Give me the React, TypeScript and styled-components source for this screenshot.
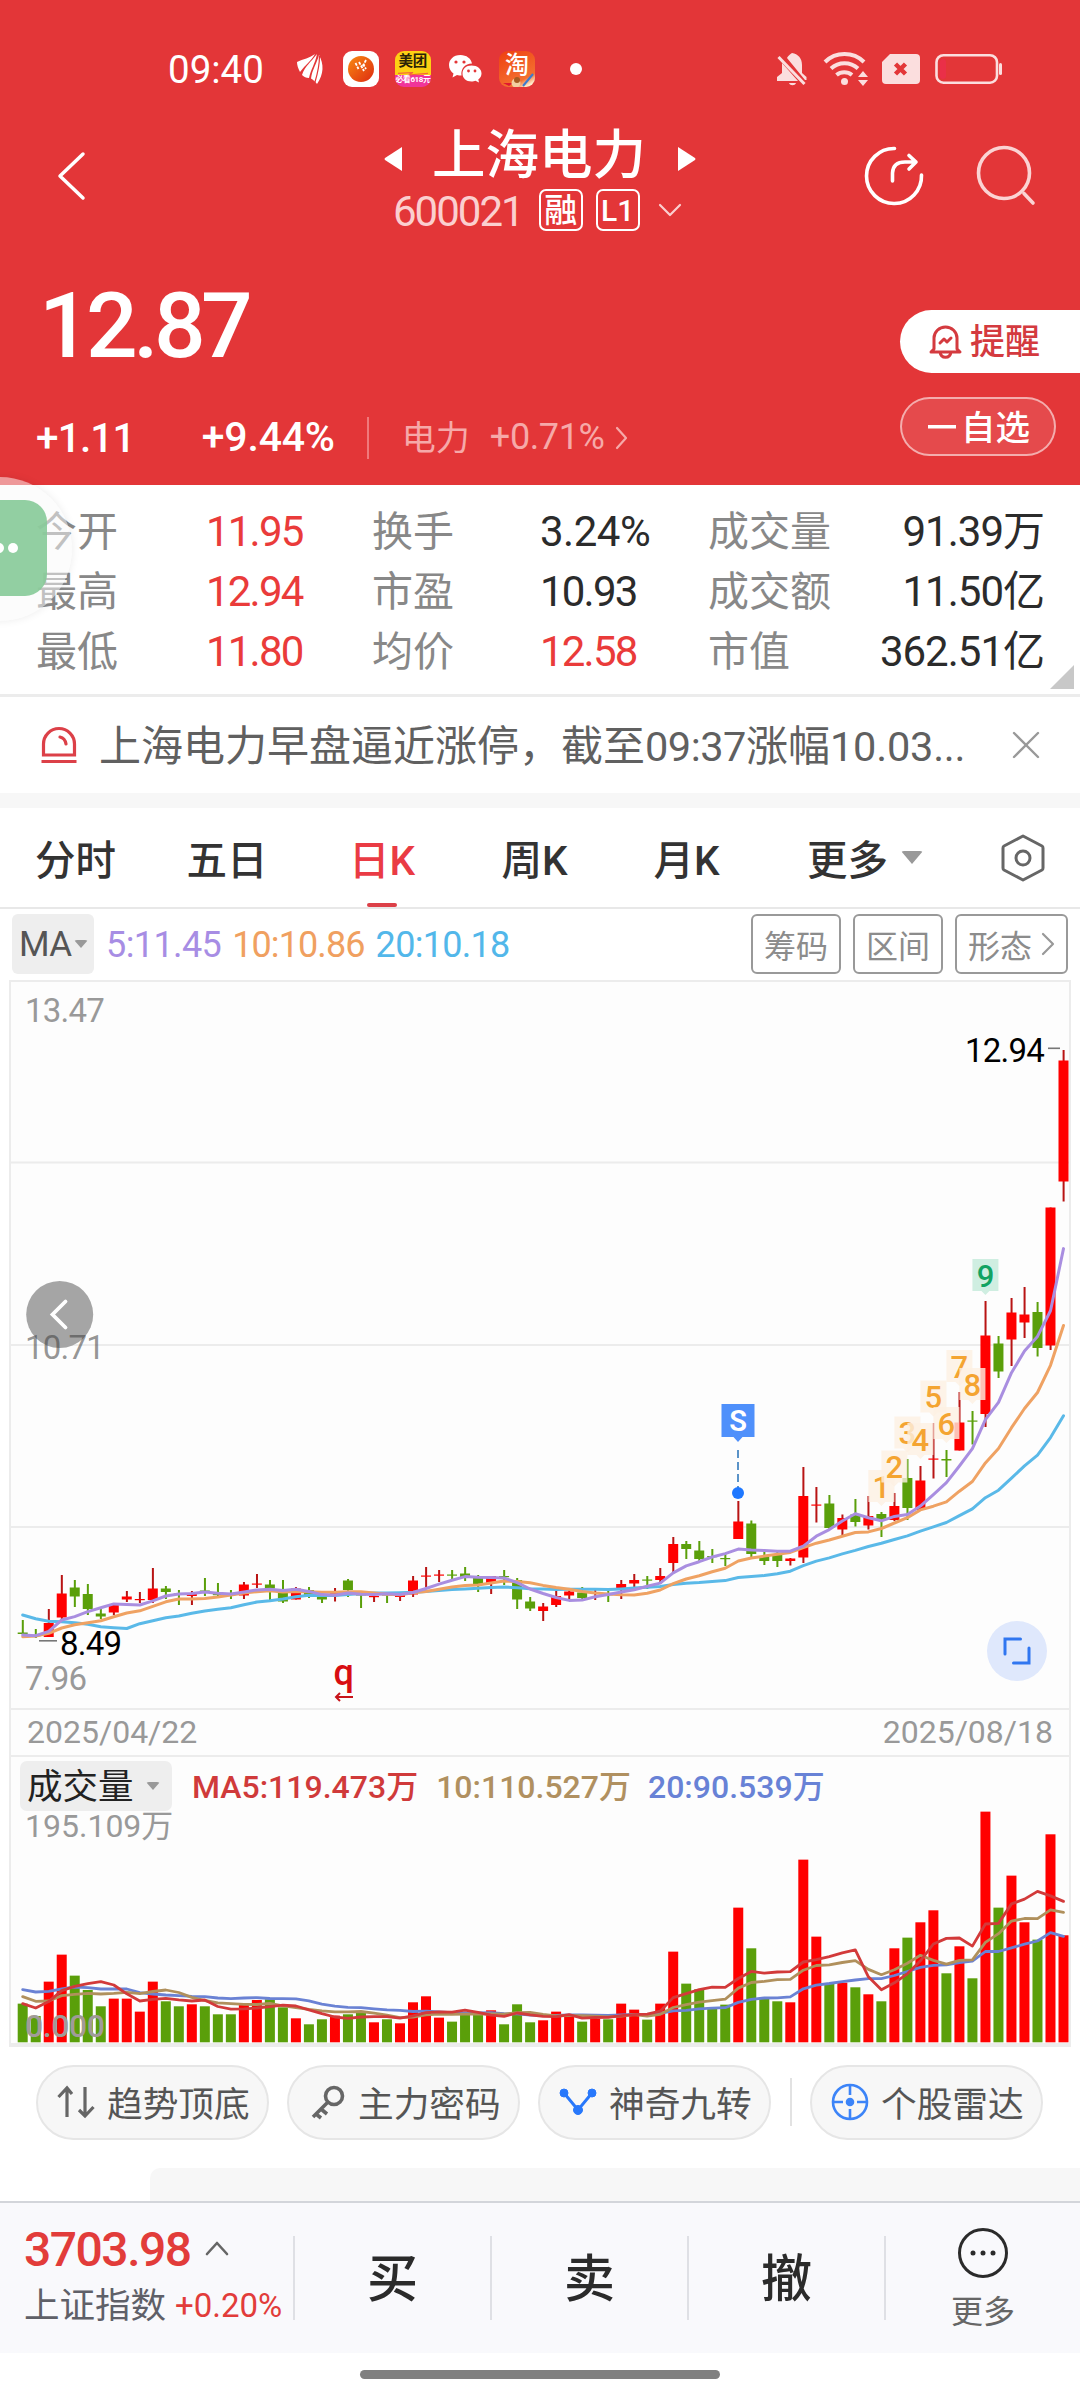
import React from 'react';
import styled, { createGlobalStyle, css } from 'styled-components';

const RED = '#e33638';
const UP = '#ff0000';
const DOWN = '#5a9f0a';

const Global = createGlobalStyle`
  * { box-sizing: border-box; }
  html, body { margin: 0; padding: 0; background: #fff; }
  body { width: 1080px; font-family: Roboto, "Noto Sans CJK SC", sans-serif; color: #333; }
  svg { display: block; flex: none; overflow: visible; }
`;

const Screen = styled.div`
  position: relative;
  width: 1080px;
  height: 2400px;
  overflow: hidden;
  display: flex;
  flex-direction: column;
  background: #fff;
`;

const Txt = styled.span<{ $s: number; $c?: string; $w?: number; $ls?: number; $ml?: number; $mt?: number }>`
  flex: none;
  white-space: nowrap;
  line-height: 1.2;
  font-size: ${(p) => p.$s}px;
  color: ${(p) => p.$c || 'inherit'};
  font-weight: ${(p) => p.$w || 400};
  letter-spacing: ${(p) => p.$ls || 0}px;
  margin-left: ${(p) => p.$ml || 0}px;
  margin-top: ${(p) => p.$mt || 0}px;
`;

/* ---------- header ---------- */
const Header = styled.header`
  height: 485px;
  flex: none;
  background: ${RED};
  color: #fff;
  display: flex;
  flex-direction: column;
`;
const StatusBar = styled.div`
  height: 104px;
  padding: 34px 76px 0 168px;
  display: flex;
  align-items: center;
  justify-content: space-between;
`;
const StatusGroup = styled.div<{ $gap: number }>`
  display: flex;
  align-items: center;
  gap: ${(p) => p.$gap}px;
`;
const AppTile = styled.div<{ $bg: string }>`
  width: 36px;
  height: 36px;
  border-radius: 9px;
  overflow: hidden;
  background: ${(p) => p.$bg};
  display: flex;
  flex-direction: column;
  align-items: center;
  line-height: 1;
  white-space: nowrap;
`;
const TitleBar = styled.div`
  height: 150px;
  display: grid;
  grid-template-columns: 380px 1fr 380px;
`;
const NavLeft = styled.div`
  padding: 48px 0 0 57px;
`;
const NavRight = styled.div`
  padding: 42px 45px 0 0;
  display: flex;
  justify-content: flex-end;
  gap: 54px;
`;
const TitleCol = styled.div`
  display: flex;
  flex-direction: column;
`;
const TitleLine = styled.div`
  height: 82px;
  padding: 27px 0 0 4px;
  display: flex;
  align-items: center;
`;
const CodeLine = styled.div`
  height: 48px;
  padding-left: 13px;
  display: flex;
  align-items: center;
`;
const Tag = styled.span<{ $ml: number; $s: number }>`
  width: 44px;
  height: 42px;
  margin-left: ${(p) => p.$ml}px;
  border: 2px solid #fff;
  border-radius: 7px;
  font-size: ${(p) => p.$s}px;
  font-weight: 500;
  line-height: 39px;
  display: flex;
  justify-content: center;
  white-space: nowrap;
`;
const Quote = styled.div`
  flex: 1;
  display: flex;
  justify-content: space-between;
`;
const QuoteLeft = styled.div`
  display: flex;
  flex-direction: column;
  padding-left: 36px;
`;
const PriceLine = styled.div`
  height: 143px;
  padding: 2px 0 0 3px;
  display: flex;
  align-items: center;
`;
const ChangeLine = styled.div`
  height: 82px;
  display: flex;
  align-items: center;
`;
const Bar = styled.i<{ $h: number; $c: string; $ml?: number; $mr?: number }>`
  flex: none;
  width: 2px;
  height: ${(p) => p.$h}px;
  background: ${(p) => p.$c};
  margin-left: ${(p) => p.$ml || 0}px;
  margin-right: ${(p) => p.$mr || 0}px;
`;
const QuoteRight = styled.div`
  width: 180px;
  padding-top: 56px;
  display: flex;
  flex-direction: column;
  gap: 24px;
`;
const RemindButton = styled.div`
  height: 63px;
  padding-left: 29px;
  border-radius: 32px 0 0 32px;
  background: #fff;
  color: #d43a3f;
  display: flex;
  align-items: center;
`;
const WatchButton = styled.div`
  width: 156px;
  height: 59px;
  padding-left: 26px;
  border: 2px solid rgba(255, 255, 255, 0.55);
  border-radius: 30px;
  background: rgba(255, 255, 255, 0.1);
  display: flex;
  align-items: center;
`;

/* ---------- statistics ---------- */
const Stats = styled.section`
  height: 212px;
  flex: none;
  position: relative;
  padding: 17px 36px 0 36px;
  border-bottom: 3px solid #ececec;
  display: grid;
  grid-template-columns: 170px 166px 168px 168px 140px 1fr;
  grid-auto-rows: 60px;
  align-items: center;
`;
const Label = styled.span`
  font-size: 41px;
  line-height: 60px;
  color: #888;
  white-space: nowrap;
`;
const Value = styled.span<{ $up?: boolean; $end?: boolean; $ls?: number }>`
  font-size: 42px;
  line-height: 60px;
  letter-spacing: ${(p) => p.$ls ?? -1.8}px;
  white-space: nowrap;
  color: ${(p) => (p.$up ? '#ea3b3a' : '#2b2b2b')};
  ${(p) => p.$end && css`justify-self: end;`}
`;
const Corner = styled.i`
  position: absolute;
  right: 6px;
  bottom: 5px;
  border-style: solid;
  border-width: 0 0 24px 24px;
  border-color: transparent transparent #c8c8c8 transparent;
`;
const Floating = styled.div`
  position: absolute;
  left: -72px;
  top: 477px;
  width: 144px;
  height: 144px;
  border-radius: 50%;
  background: rgba(250, 250, 250, 0.5);
  box-shadow: 0 0 8px rgba(0, 0, 0, 0.08);
`;
const FloatingInner = styled.div`
  position: absolute;
  left: 23px;
  top: 23px;
  width: 96px;
  height: 96px;
  border-radius: 22px;
  background: rgba(134, 202, 152, 0.9);
  display: flex;
  align-items: center;
  justify-content: flex-end;
  gap: 4px;
  padding-right: 29px;
`;
const Dot = styled.i<{ $d: number }>`
  width: ${(p) => p.$d}px;
  height: ${(p) => p.$d}px;
  border-radius: 50%;
  background: #fff;
  flex: none;
`;

/* ---------- news + tabs ---------- */
const News = styled.section`
  height: 111px;
  flex: none;
  padding: 0 40px 0 41px;
  border-bottom: 15px solid #f7f7f7;
  display: flex;
  align-items: center;
  color: #606060;
`;
const NewsText = styled.div`
  width: 880px;
  margin: 4px 0 0 22px;
  font-size: 42px;
  line-height: 60px;
  white-space: nowrap;
`;
const Tabs = styled.nav`
  height: 101px;
  flex: none;
  border-bottom: 2px solid #e8e8e8;
  display: flex;
  padding-right: 34px;
`;
const Tab = styled.div<{ $w: number; $on?: boolean }>`
  width: ${(p) => p.$w}px;
  flex: none;
  display: flex;
  align-items: center;
  justify-content: center;
  position: relative;
  font-size: 40.5px;
  font-weight: 500;
  white-space: nowrap;
  color: ${(p) => (p.$on ? '#ea3b44' : '#333')};
  ${(p) => p.$on && css`
    &::after {
      content: '';
      position: absolute;
      bottom: 0;
      width: 30px;
      height: 4px;
      border-radius: 2px;
      background: #dc4048;
    }
  `}
`;
const Caret = styled.i<{ $w: number; $ml: number }>`
  border-style: solid;
  border-color: #999 transparent transparent;
  border-width: ${(p) => p.$w * 0.6}px ${(p) => p.$w / 2}px 0;
  border-radius: 3px;
  margin-left: ${(p) => p.$ml}px;
`;
const MaRow = styled.div`
  height: 71px;
  flex: none;
  padding: 0 12px 2px;
  display: flex;
  align-items: center;
`;
const MaChip = styled.div`
  width: 82px;
  height: 60px;
  border-radius: 6px;
  background: #eee;
  padding-left: 7px;
  display: flex;
  align-items: center;
  color: #555;
`;
const ToolGroup = styled.div`
  margin-left: auto;
  display: flex;
  gap: 12px;
`;
const Tool = styled.div<{ $w: number }>`
  width: ${(p) => p.$w}px;
  height: 60px;
  border: 2px solid #999;
  border-radius: 6px;
  font-size: 32px;
  color: #8c8c8c;
  display: flex;
  align-items: center;
  justify-content: center;
  gap: 9px;
  white-space: nowrap;
`;

/* ---------- chart ---------- */
const Panel = styled.section`
  flex: none;
  height: 1067px;
  margin: 0 9px;
  border: 2px solid #ececec;
  border-bottom-width: 4px;
  background: #fdfdfd;
  display: flex;
  flex-direction: column;
`;
const DateRow = styled.div`
  height: 49px;
  flex: none;
  padding: 0 16px 0 16px;
  border-top: 2px solid #ececec;
  border-bottom: 2px solid #ececec;
  display: flex;
  align-items: center;
  justify-content: space-between;
`;
const VolumeHead = styled.div`
  height: 54px;
  flex: none;
  padding: 4px 0 0 9px;
  display: flex;
  align-items: center;
`;
const VolumeChip = styled.div`
  width: 152px;
  height: 50px;
  border-radius: 7px;
  background: #eee;
  padding-left: 7px;
  display: flex;
  align-items: center;
`;

type Candle = [number, number, number, number, number];
/* up flag, high, body top, body bottom, low on the vertical scale of the pane */
const CANDLES: Candle[] = [
  [0, 1620, 1632.5, 1634, 1634], [0, 1629, 1635, 1636, 1638], [1, 1609, 1623, 1637, 1637], [1, 1575, 1593.5, 1617.5, 1620],
  [0, 1580, 1587.5, 1596.5, 1607], [0, 1584, 1594, 1609, 1615], [0, 1609, 1613.5, 1616.5, 1619], [1, 1603, 1604, 1612.5, 1615],
  [1, 1591, 1596.5, 1599.5, 1602], [1, 1592, 1599, 1600, 1603], [1, 1568, 1588.5, 1600, 1603], [0, 1586, 1588.5, 1592, 1599],
  [0, 1590, 1593.5, 1594.5, 1605], [1, 1591, 1593.5, 1596, 1605], [0, 1578, 1590.5, 1591.5, 1596], [0, 1583, 1594, 1595, 1598],
  [0, 1590, 1594, 1595, 1599], [1, 1582, 1584.5, 1595.5, 1599], [1, 1574, 1583.5, 1584.5, 1588], [0, 1580, 1584.5, 1588.5, 1601],
  [0, 1580, 1590, 1601.5, 1603], [1, 1587, 1588.5, 1599.5, 1599.5], [0, 1587, 1590, 1595, 1598], [0, 1591, 1595, 1599.5, 1603],
  [1, 1588, 1591.5, 1595, 1601.5], [0, 1579, 1580.5, 1590, 1597], [0, 1592, 1594, 1595.5, 1608], [1, 1593, 1596, 1597, 1602],
  [0, 1593, 1594, 1595.5, 1603], [1, 1593, 1595, 1597, 1601], [1, 1576, 1580.5, 1594.5, 1597], [1, 1567, 1575.5, 1576.5, 1587],
  [1, 1570, 1574.5, 1575.5, 1582], [0, 1570, 1574.5, 1575.5, 1580], [0, 1567, 1573.5, 1577, 1581], [0, 1575, 1577, 1584, 1592],
  [1, 1576, 1576, 1583, 1594], [0, 1570, 1576, 1577, 1585], [0, 1578, 1580, 1599.5, 1609], [0, 1597, 1601.5, 1608.5, 1611],
  [1, 1603, 1606.5, 1611, 1621], [1, 1591, 1596, 1605, 1607], [1, 1589, 1591.5, 1595.5, 1600], [0, 1587, 1592.5, 1598, 1599],
  [1, 1588, 1592, 1593, 1600], [0, 1591, 1594, 1595, 1602], [1, 1580, 1584, 1588.5, 1599], [1, 1574, 1580, 1583.5, 1587],
  [0, 1576, 1579.5, 1580.5, 1589], [1, 1568, 1576, 1580, 1584], [1, 1537, 1544, 1563, 1573], [0, 1541, 1544, 1549, 1559],
  [0, 1541, 1550.5, 1559, 1561], [0, 1549, 1556, 1557, 1563], [0, 1554, 1558, 1559, 1566], [1, 1501, 1521.5, 1539, 1539],
  [0, 1520.5, 1523.5, 1554, 1559], [0, 1551, 1556.5, 1561, 1565], [0, 1551, 1555, 1561, 1567], [1, 1558, 1558.5, 1561, 1565.5],
  [1, 1467, 1496, 1557.5, 1563], [1, 1487, 1504.5, 1505.5, 1522.5], [0, 1495, 1503.5, 1528, 1529.5], [1, 1514.5, 1518, 1529.5, 1537],
  [0, 1499, 1514.5, 1522, 1526.5], [1, 1496, 1516, 1525.5, 1529.5], [0, 1512, 1514, 1520, 1537], [1, 1493, 1506, 1520, 1521],
  [0, 1459, 1478, 1508, 1520], [1, 1466, 1480.5, 1510, 1510], [1, 1423, 1458.5, 1459.5, 1478.5], [0, 1450, 1459, 1460.5, 1477],
  [1, 1392, 1422.5, 1450.5, 1450.5], [0, 1411, 1420.5, 1421.5, 1444.5], [1, 1301, 1335.5, 1414, 1427], [0, 1336, 1343.5, 1371.5, 1378],
  [1, 1298, 1312.5, 1339.5, 1366], [1, 1287, 1314.5, 1322.5, 1338], [0, 1302, 1312, 1348, 1356.5], [1, 1207.5, 1207.5, 1345.5, 1350],
  [1, 1050, 1060.5, 1181.5, 1201.5],
];
const VOLUMES = [
  116, 79, 182, 263, 200, 157, 108, 131, 131, 92, 182, 123, 108, 114, 108, 84, 84, 112, 127, 129, 105, 72, 54, 69, 80, 84, 92,
  60, 69, 57, 120, 138, 74, 62, 87, 89, 96, 54, 114, 60, 66, 92, 82, 62, 70, 69, 116, 98, 68, 116, 272, 176, 159, 105, 113, 404,
  282, 132, 123, 120, 548, 317, 177, 179, 165, 144, 123, 282, 314, 360, 396, 207, 288, 192, 692, 404, 500, 360, 308, 624, 321,
];
const STEP = 13.01;
const cx = (i: number) => 22.7 + STEP * i;

/* Moving average; the first values depend on earlier days and are given. */
const average = (values: number[], lead: number[]) =>
  values.map((_, i) => {
    const n = lead.length + 1;
    if (i < lead.length) return lead[i];
    return values.slice(i - n + 1, i + 1).reduce((a, b) => a + b, 0) / n;
  });
const CLOSES = CANDLES.map((c) => (c[0] ? c[2] : c[3]));
const MA5 = average(CLOSES, [1635, 1635.7, 1631.3, 1620]);
const MA10 = average(CLOSES, [1636.7, 1636, 1633.3, 1628, 1624.7, 1622.7, 1620.7, 1616.7, 1613]);
const MA20 = average(CLOSES, [
  1615, 1618.7, 1621.3, 1621.7, 1622.7, 1624.3, 1626.7, 1627.7, 1628.5, 1623.7, 1620.7, 1617.7, 1616, 1613.3, 1611, 1609.3, 1607.7,
  1604.7, 1602,
]);
const VMA5 = average(VOLUMES, [116, 103, 122, 155]);
const VMA10 = average(VOLUMES, [137, 123, 124, 140, 144, 147, 145, 147, 150]);
const VMA20 = average(VOLUMES, [158, 151, 153, 160, 166, 164, 160, 160, 160, 149, 145, 142, 140, 138, 137, 133, 131, 133, 134]);

const line = (v: number[], y: (n: number) => number) => v.map((n, i) => `${cx(i).toFixed(1)},${y(n).toFixed(1)}`).join(' ');
const same = (n: number) => n;
const volY = (n: number) => 2042.3 - n / 3;

const MARKS: [number, number, string][] = [
  [66, 1470, '1'], [67, 1450.5, '2'], [68, 1416.5, '3'], [69, 1423, '4'], [70, 1380.5, '5'],
  [71, 1407, '6'], [72, 1350, '7'], [73, 1368, '8'], [74, 1259, '9'],
];

const AxisText = styled.text<{ $c?: string; $s?: number; $ls?: number; $w?: number }>`
  font-size: ${(p) => p.$s || 33}px;
  fill: ${(p) => p.$c || '#999'};
  letter-spacing: ${(p) => p.$ls ?? -0.8}px;
  font-weight: ${(p) => p.$w || 400};
`;

function PriceChart() {
  return (
    <svg width="1058" height="726" viewBox="11 982 1058 726">
      {[1162.5, 1345, 1527].map((y) => (
        <rect key={y} x="11" y={y - 1} width="1058" height="2" fill="#ececec" />
      ))}
      <circle cx="59.7" cy="1314.5" r="33.5" fill="#a5a5a5" />
      <path d="M65.500 1301.500 L52.500 1314.5 L65.500 1327.500" fill="none" stroke="#fff" strokeWidth="3.8" strokeLinecap="round" />
      <AxisText x="25" y="1022">13.47</AxisText>
      <AxisText x="25" y="1359" $c="rgba(60,60,60,0.55)">10.71</AxisText>
      <AxisText x="25" y="1690">7.96</AxisText>
      {CANDLES.map(([up, hi, top, bottom, lo], i) => (
        <g key={i} fill={up ? UP : DOWN}>
          <rect x={cx(i) - 0.9} y={hi} width="2" height={lo - hi} fill={up ? '#b81414' : DOWN} />
          <rect x={cx(i) - 5} y={top} width="10" height={Math.max(1.2, bottom - top)} />
        </g>
      ))}
      <g fill="none" strokeWidth="3" strokeLinejoin="round" strokeLinecap="round">
        <polyline points={line(MA20, same)} stroke="#5ab9e8" />
        <polyline points={line(MA10, same)} stroke="#efa263" />
        <polyline points={line(MA5, same)} stroke="#a98ee0" />
      </g>
      {MARKS.map(([i, y, n]) => {
        const x = cx(i);
        const last = n === '9';
        return (
          <g key={n}>
            <path
              d={`M${x - 13} ${y} h26 v32 h-9 l-4 4 l-4 -4 h-9 z`}
              fill={last ? '#cfeee1' : '#fdf0e2'}
              fillOpacity={last ? 1 : 0.8}
            />
            <AxisText x={x} y={y + 27.500} textAnchor="middle" $s={31} $ls={0} $w={500} $c={last ? '#12a362' : '#f4a431'}>
              {n}
            </AxisText>
          </g>
        );
      })}
      <path d="M721.5 1404 h33 v33 h-12 l-4.500 5 l-4.500 -5 h-12 z" fill="#4f90fb" />
      <AxisText x="738" y="1431" textAnchor="middle" $s={29} $ls={0} $w={600} $c="#fff">S</AxisText>
      <path d="M738 1450 V1488" stroke="#5a93c8" strokeWidth="2" strokeDasharray="8 4" />
      <circle cx="738" cy="1493" r="6" fill="#1f78ff" />
      <rect x="39" y="1640" width="18" height="1.6" fill="#777" />
      <AxisText x="60" y="1655" $c="#000">8.49</AxisText>
      <rect x="1048" y="1047.500" width="12" height="1.6" fill="#777" />
      <AxisText x="965" y="1062" $c="#000">12.94</AxisText>
      <AxisText x="333.500" y="1684.500" $c="#d80d12" $s={36} $w={500}>q</AxisText>
      <path d="M353 1697 H336 M340 1693 l-4 4 l4 4" fill="none" stroke="#c8141a" strokeWidth="2" />
      <circle cx="1017" cy="1651" r="30" fill="#dfe8fc" />
      <path d="M1005 1654 V1639 H1020.500 M1029 1648 V1663 H1013.500" fill="none" stroke="#3076f0" strokeWidth="3" strokeLinecap="round" />
    </svg>
  );
}

function VolumeChart() {
  return (
    <svg width="1058" height="232" viewBox="11 1811 1058 232">
      <AxisText x="25" y="1837" $s={32} $ls={0}>195.109万</AxisText>
      {VOLUMES.map((v, i) => (
        <rect key={i} x={cx(i) - 5} y={volY(v)} width="10" height={v / 3} fill={CANDLES[i][0] ? UP : DOWN} />
      ))}
      <g fill="none" strokeWidth="2.800" strokeLinejoin="round" strokeLinecap="round">
        <polyline points={line(VMA20, volY)} stroke="#6a82d4" />
        <polyline points={line(VMA10, volY)} stroke="#b0905c" />
        <polyline points={line(VMA5, volY)} stroke="#d23a3a" />
      </g>
      <AxisText x="25" y="2037" $s={32} $ls={-0.4} $w={500} $c="#a09b98">0.000</AxisText>
    </svg>
  );
}

/* ---------- bottom ---------- */
const ChipRow = styled.div`
  height: 121px;
  flex: none;
  padding: 18px 36px 0;
  display: flex;
`;
const Chip = styled.div<{ $ml?: number; $pl: number; $gap: number }>`
  width: 233px;
  height: 75px;
  flex: none;
  margin-left: ${(p) => p.$ml || 0}px;
  padding: 0 0 2px ${(p) => p.$pl}px;
  border: 2px solid #e6e6e6;
  border-radius: 38px;
  background: #f7f7f7;
  display: flex;
  align-items: center;
  gap: ${(p) => p.$gap}px;
  font-size: 35.7px;
  color: #555;
  white-space: nowrap;
`;
const ChipDivider = styled.i`
  width: 2px;
  height: 48px;
  margin: 13px 0 0 19px;
  background: #e2e2e2;
`;
const Peek = styled.div`
  height: 33px;
  flex: none;
  margin-left: 150px;
  border-radius: 10px 0 0 0;
  background: #f7f7f7;
`;
const Footer = styled.footer`
  height: 152px;
  flex: none;
  border-top: 2px solid #d3d5da;
  background: #f9f9fc;
  display: flex;
`;
const IndexBox = styled.div`
  width: 293px;
  padding: 18px 0 0 24px;
  display: flex;
  flex-direction: column;
  gap: 1px;
`;
const IndexLine = styled.div`
  display: flex;
  align-items: center;
  height: 56px;
`;
const Action = styled.div`
  width: 197px;
  display: flex;
  align-items: center;
`;
const ActionText = styled.span`
  flex: 1;
  padding-top: 4px;
  text-align: center;
  font-size: 51px;
  font-weight: 500;
  line-height: 70px;
  color: #2b2b2b;
`;
const More = styled.div`
  flex: 1;
  display: flex;
  align-items: center;
`;
const MoreBody = styled.div`
  flex: 1;
  padding-top: 4px;
  display: flex;
  flex-direction: column;
  align-items: center;
  gap: 15px;
`;
const HomeArea = styled.div`
  height: 47px;
  flex: none;
  padding-top: 17px;
  display: flex;
  justify-content: center;
`;
const HomeBar = styled.i`
  width: 360px;
  height: 9px;
  border-radius: 5px;
  background: #808080;
`;

const Chevron = ({ d, w, h, c, s, ml = 0 }: { d: string; w: number; h: number; c: string; s: number; ml?: number }) => (
  <svg width={w + ml} height={h} viewBox={`${-ml} 0 ${w + ml} ${h}`} fill="none" stroke={c} strokeWidth={s} strokeLinecap="round" strokeLinejoin="round">
    <path d={d} />
  </svg>
);

function StatusIcons() {
  return (
    <StatusGroup $gap={16}>
      <svg width="30" height="36" viewBox="0 0 30 36" fill="#fff">
        <path d="M0 11 C6 8 13 7 18 3 C14 10 9 13 3 21 C1 17 0 14 0 11z" />
        <path d="M5 24 C8 15 14 11 20 3 C18 13 14 18 12 27 C9 27 7 26 5 24z" />
        <path d="M14 27.500 C15 19 20 12 22 4 C27 13 27 23 20 33 C18 30 16 29 14 27.500z" />
        <path d="M18 31 C21 21 22.500 12 22.500 5" stroke={RED} strokeWidth="1.200" fill="none" />
      </svg>
      <AppTile $bg="#fff">
        <svg width="36" height="36" viewBox="0 0 36 36">
          <defs>
            <linearGradient id="sun" x1="0" y1="0" x2="1" y2="1">
              <stop offset="0" stopColor="#f98a10" />
              <stop offset="1" stopColor="#dd2a12" />
            </linearGradient>
          </defs>
          <circle cx="18" cy="18" r="13" fill="url(#sun)" />
          <path d="M12.500 12 l3 6 M16 11 l5 9 M20 13 l3 5 M23 9 l-3.500 7" stroke="#fff" strokeWidth="1.800" strokeDasharray="3 1" />
        </svg>
      </AppTile>
      <AppTile $bg="linear-gradient(#fdd013 66%, #f0349a 67%)">
        <Txt $s={14.5} $w={700} $c="#2a2208" $mt={2}>美团</Txt>
        <svg width="36" height="5" viewBox="0 0 36 6"><path d="M0 4 L18 3 L12 6 L36 4" stroke="#f6623a" strokeWidth="1.500" fill="none" /></svg>
        <Txt $s={8} $w={700} $c="#fff" $ls={-0.4}>必看618元</Txt>
      </AppTile>
      <svg width="36" height="36" viewBox="0 0 36 36" fill="#fff">
        <path d="M13.500 4 C6 4 2 9 2 14 C2 18 4 20.500 6.500 22.500 L5.500 26.500 L10 24 C11.500 24.500 13 24.500 14.500 24.500 C13.500 18 18 12.500 25 12.500 C24 7.500 19.500 4 13.500 4z" />
        <path d="M24.500 14.500 C19 14.500 15.500 18 15.500 22.500 C15.500 27 19 30.500 24.500 30.500 C26 30.500 27.500 30 28.500 29.700 L32 31.500 L31.300 28.500 C33.300 27 34.500 25 34.500 22.500 C34.500 18 30.500 14.500 24.500 14.500z" />
        <g fill={RED}><circle cx="9" cy="11" r="1.600" /><circle cx="17" cy="11" r="1.600" /><circle cx="21.500" cy="20" r="1.400" /><circle cx="28" cy="20" r="1.400" /></g>
      </svg>
      <AppTile $bg="linear-gradient(150deg,#ee3f10,#f47030 75%,#ffe9c8 90%)">
        <Txt $s={24} $w={500} $c="#fff">淘</Txt>
        <svg width="36" height="8" viewBox="0 0 36 8"><path d="M4 3 l6 3 l4 -3 z" fill="#e01830" /><circle cx="17" cy="3" r="4.500" fill="#f3cfa0" /><circle cx="18" cy="0" r="3" fill="#a65b22" /><path d="M24 6 L34 -6" stroke="#3d7ad0" strokeWidth="2" /></svg>
      </AppTile>
      <svg width="31" height="12" viewBox="0 0 31 12"><circle cx="25" cy="6" r="6" fill="#fff" /></svg>
    </StatusGroup>
  );
}

function SystemIcons() {
  return (
    <svg width="228" height="40" viewBox="776 49 228 40" fill="#fbdede">
      <path d="M792 53 C798 54 802 58 802 65 V73 L806.500 77 V80 L805 80 L787 58 C788 56 790 54 792 53z M782 63 L798 81 H777 V77 L782 73z M789 83 h7 c-1 3 -6 3 -7 0z" />
      <path d="M778.500 57 L804.500 84" stroke="#fbdede" strokeWidth="3" />
      <g fill="none" stroke="#fbdede" strokeWidth="4">
        <path d="M825 62 A28 28 0 0 1 864 62" />
        <path d="M831 68.500 A20 20 0 0 1 858 68.500" />
        <path d="M836.500 75 A12 12 0 0 1 852 75" />
      </g>
      <circle cx="844.500" cy="81.500" r="3.500" />
      <path d="M858 77 h10 l-5 -6z M858 80 h10 l-5 6z" />
      <path d="M890 54 h26 a4 4 0 0 1 4 4 v22 a4 4 0 0 1 -4 4 h-30 a4 4 0 0 1 -4 -4 v-18z" />
      <path d="M895.500 64 l10 10 M905.500 64 l-10 10" stroke={RED} strokeWidth="4.500" />
      <rect x="936.500" y="55.200" width="60.500" height="27.500" rx="7" fill="none" stroke="#fbdede" strokeWidth="2.600" />
      <rect x="940" y="59" width="6" height="20" rx="3" fill="#ea2f48" />
      <rect x="999" y="63" width="3" height="12" rx="1.500" />
    </svg>
  );
}

const STATS: [string, string, boolean, string, string, boolean, string, string][] = [
  ['今开', '11.95', true, '换手', '3.24%', false, '成交量', '91.39万'],
  ['最高', '12.94', true, '市盈', '10.93', false, '成交额', '11.50亿'],
  ['最低', '11.80', true, '均价', '12.58', true, '市值', '362.51亿'],
];

export default function App() {
  return (
    <Screen>
      <Global />
      <Header>
        <StatusBar>
          <StatusGroup $gap={33}>
            <Txt $s={38.5} $mt={3}>09:40</Txt>
            <StatusIcons />
          </StatusGroup>
          <SystemIcons />
        </StatusBar>
        <TitleBar>
          <NavLeft><Chevron d="M26 2 L3 24 L26 46" w={30} h={48} c="#fff" s={3.5} /></NavLeft>
          <TitleCol>
            <TitleLine>
              <svg width="18" height="26" viewBox="0 0 18 26"><path d="M18 1 V25 L1 14 Q0 13 1 12z" fill="#fff" /></svg>
              <Txt $s={53.5} $w={500} $ml={30} $mt={-4}>上海电力</Txt>
              <svg width="50" height="26" viewBox="-32 0 50 26"><path d="M0 1 V25 L17 14 Q18 13 17 12z" fill="#fff" /></svg>
            </TitleLine>
            <CodeLine>
              <Txt $s={42} $ls={-2} $c="#fbcfcf" $mt={4}>600021</Txt>
              <Tag $ml={16} $s={33}>融</Tag>
              <Tag $ml={13} $s={30}>L1</Tag>
              <Chevron d="M2 3 L12 13 L22 3" w={24} h={16} c="#fbcfcf" s={2.2} ml={18} />
            </CodeLine>
          </TitleCol>
          <NavRight>
            <svg width="58" height="60" viewBox="865 146 58 60" fill="none" stroke="#fff" strokeWidth="3.600" strokeLinecap="round" strokeLinejoin="round">
              <path d="M894.500 148.500 A27.500 27.500 0 1 0 921.500 175" />
              <path d="M892.500 181 V173 Q893 162 905 162 H916 M909 155.500 L916 162 L909 169" />
            </svg>
            <svg width="58" height="60" viewBox="978 146 58 60" fill="none" stroke="#fbd3d3" strokeWidth="3.600" strokeLinecap="round">
              <circle cx="1005" cy="173" r="25.500" />
              <path d="M1025 193.500 L1034 203" />
            </svg>
          </NavRight>
        </TitleBar>
        <Quote>
          <QuoteLeft>
            <PriceLine><Txt $s={91} $w={500} $ls={-4.6}>12.87</Txt></PriceLine>
            <ChangeLine>
              <Txt $s={40.5} $w={500} $ls={-0.8}>+1.11</Txt>
              <Txt $s={41} $w={500} $ls={-0.2} $ml={67}>+9.44%</Txt>
              <Bar $h={42} $c="#f0797b" $ml={32} $mr={33} />
              <Txt $s={34} $c="#f6a9a9">电力</Txt>
              <Txt $s={36} $c="#f6a9a9" $ls={-0.4} $ml={20}>+0.71%</Txt>
              <Chevron d="M2 2 L11 12 L2 22" w={14} h={24} c="#f6a9a9" s={2.2} ml={11} />
            </ChangeLine>
          </QuoteLeft>
          <QuoteRight>
            <RemindButton>
              <svg width="33" height="36" viewBox="0 0 33 36" fill="none" stroke="#d43a3f" strokeWidth="3" strokeLinecap="round" strokeLinejoin="round">
                <path d="M5 25 V14 A11.500 11 0 0 1 28 14 V25 L31 28 H2 L5 25z M11 28 C12 35 21 35 22 28" />
                <path d="M11 19 L15 15 L18 18 L22 14" />
              </svg>
              <Txt $s={35} $w={500} $ml={8} $mt={3}>提醒</Txt>
            </RemindButton>
            <WatchButton>
              <svg width="30" height="4" viewBox="0 0 30 4"><rect width="28" height="3.500" fill="#fff" /></svg>
              <Txt $s={34.5} $w={500} $ml={3} $mt={4}>自选</Txt>
            </WatchButton>
          </QuoteRight>
        </Quote>
      </Header>

      <Stats>
        {STATS.map(([a, av, aUp, b, bv, bUp, c, cv]) => (
          <React.Fragment key={a}>
            <Label>{a}</Label>
            <Value $up={aUp}>{av}</Value>
            <Label>{b}</Label>
            <Value $up={bUp} $ls={bv.endsWith('%') ? -0.5 : -1.8}>{bv}</Value>
            <Label>{c}</Label>
            <Value $end $ls={-1}>{cv}</Value>
          </React.Fragment>
        ))}
        <Corner />
      </Stats>

      <News>
        <svg width="36" height="38" viewBox="0 0 36 38" fill="none" stroke="#dc4048" strokeWidth="3.200">
          <path d="M2.500 29 V18 A15.500 15.500 0 0 1 33.500 18 V29z M0.500 35.500 H35.500" />
          <path d="M19 11 Q24 12 25 18" strokeLinecap="round" />
        </svg>
        <NewsText>
          上海电力早盘逼近涨停，截至<Txt $s={41.5} $ls={-0.5}>09:37</Txt>涨幅<Txt $s={41.5} $ls={-0.2}>10.03...</Txt>
        </NewsText>
        <Chevron d="M2 2 L26 26 M26 2 L2 26" w={28} h={28} c="#999" s={2.4} ml={33} />
      </News>

      <Tabs>
        <Tab $w={151}>分时</Tab>
        <Tab $w={152}>五日</Tab>
        <Tab $w={158} $on>日K</Tab>
        <Tab $w={147}>周K</Tab>
        <Tab $w={157}>月K</Tab>
        <Tab $w={200}>更多<Caret $w={22} $ml={13} /></Tab>
        <Tab $w={115}>
          <svg width="46" height="48" viewBox="0 0 46 48" fill="none" stroke="#666" strokeWidth="3" strokeLinejoin="round">
            <path d="M23 2 L42 12 Q43 12.500 43 14 V34 Q43 35.500 42 36 L23 46 L4 36 Q3 35.500 3 34 V14 Q3 12.500 4 12z" />
            <circle cx="23" cy="24" r="7" />
          </svg>
        </Tab>
      </Tabs>

      <MaRow>
        <MaChip><Txt $s={35} $ls={-0.5} $mt={3}>MA</Txt><Caret $w={14} $ml={2} /></MaChip>
        <Txt $s={36} $c="#a78de4" $ls={-0.6} $ml={12} $mt={5}>5:11.45</Txt>
        <Txt $s={36} $c="#f0a060" $ls={-0.9} $ml={11} $mt={5}>10:10.86</Txt>
        <Txt $s={36} $c="#52b7ea" $ls={-0.7} $ml={11} $mt={5}>20:10.18</Txt>
        <ToolGroup>
          <Tool $w={90}>筹码</Tool>
          <Tool $w={90}>区间</Tool>
          <Tool $w={113}>形态<Chevron d="M2 2 L12 12 L2 22" w={14} h={24} c="#999" s={2.2} /></Tool>
        </ToolGroup>
      </MaRow>

      <Panel>
        <PriceChart />
        <DateRow>
          <Txt $s={32} $c="#999">2025/04/22</Txt>
          <Txt $s={32} $c="#999">2025/08/18</Txt>
        </DateRow>
        <VolumeHead>
          <VolumeChip><Txt $s={35.5} $c="#222" $mt={2}>成交量</Txt><Caret $w={14} $ml={12} /></VolumeChip>
          <Txt $s={32} $w={500} $c="#d03a3a" $ml={20} $mt={2}>MA5:119.473万</Txt>
          <Txt $s={32} $w={500} $c="#b09060" $ml={18} $mt={2}>10:110.527万</Txt>
          <Txt $s={32} $w={500} $c="#6882d6" $ml={17} $mt={2}>20:90.539万</Txt>
        </VolumeHead>
        <VolumeChart />
      </Panel>

      <ChipRow>
        <Chip $pl={19} $gap={12}>
          <svg width="38" height="32" viewBox="0 0 38 32" fill="none" stroke="#666" strokeWidth="3.200">
            <path d="M10 31 V2 M1.500 11 L10 2 L15 8 M28 1 V30 M36.500 21 L28 30 L22 24" />
          </svg>
          趋势顶底
        </Chip>
        <Chip $ml={18} $pl={22} $gap={13}>
          <svg width="34" height="34" viewBox="0 0 34 34" fill="none" stroke="#666" strokeWidth="3.600">
            <circle cx="23" cy="11" r="8.500" /><path d="M17 17 L2 32 M10 24 L16 29 M5 29 L10 33" />
          </svg>
          主力密码
        </Chip>
        <Chip $ml={18} $pl={19} $gap={12}>
          <svg width="38" height="28" viewBox="0 0 38 28" fill="#2878fb" stroke="#2878fb">
            <path d="M5 5 L19 22 L33 5" fill="none" strokeWidth="3" /><circle cx="5" cy="5" r="4" /><circle cx="33" cy="5" r="4" /><circle cx="19" cy="22" r="4.500" />
          </svg>
          神奇九转
        </Chip>
        <ChipDivider />
        <Chip $ml={18} $pl={19} $gap={12}>
          <svg width="38" height="38" viewBox="0 0 38 38" fill="none" stroke="#3c84f8" strokeWidth="2.600">
            <circle cx="19" cy="19" r="17" /><path d="M19 2 V12 M19 26 V36 M2 19 H12 M26 19 H36" /><circle cx="19" cy="19" r="3" fill="#3c84f8" />
          </svg>
          个股雷达
        </Chip>
      </ChipRow>
      <Peek />

      <Footer>
        <IndexBox>
          <IndexLine>
            <Txt $s={48} $w={500} $c="#e23c3a" $ls={-1.5} $mt={2}>3703.98</Txt>
            <Chevron d="M2 13 L12 2 L22 13" w={24} h={16} c="#666" s={2.6} ml={14} />
          </IndexLine>
          <IndexLine>
            <Txt $s={35.5} $c="#5f6068">上证指数</Txt>
            <Txt $s={33} $c="#e23c3a" $ls={0} $ml={9}>+0.20%</Txt>
          </IndexLine>
        </IndexBox>
        {['买', '卖', '撤'].map((t) => (
          <Action key={t}><Bar $h={84} $c="#dfe0e5" /><ActionText>{t}</ActionText></Action>
        ))}
        <More>
          <Bar $h={84} $c="#dfe0e5" />
          <MoreBody>
            <svg width="50" height="50" viewBox="0 0 50 50" fill="#2b2b2b">
              <circle cx="25" cy="25" r="23.500" fill="none" stroke="#2b2b2b" strokeWidth="3" />
              <circle cx="15" cy="25" r="2.500" /><circle cx="25" cy="25" r="2.500" /><circle cx="35" cy="25" r="2.500" />
            </svg>
            <Txt $s={32} $c="#666">更多</Txt>
          </MoreBody>
        </More>
      </Footer>
      <HomeArea><HomeBar /></HomeArea>
      <Floating><FloatingInner><Dot $d={10} /><Dot $d={10} /></FloatingInner></Floating>
    </Screen>
  );
}
